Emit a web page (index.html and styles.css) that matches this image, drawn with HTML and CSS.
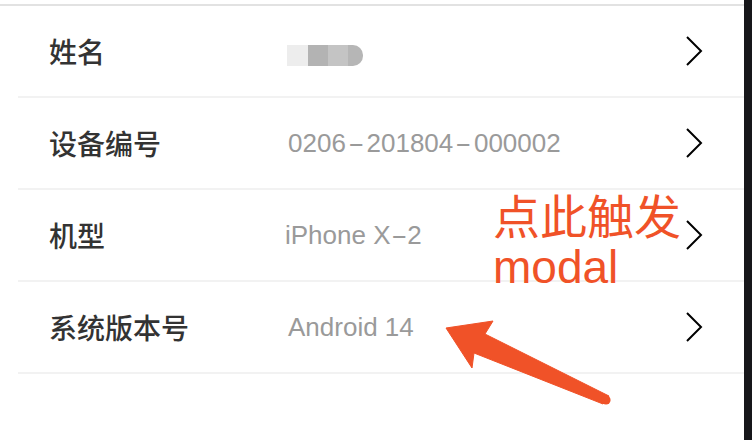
FILE: index.html
```html
<!DOCTYPE html>
<html lang="zh-CN">
<head>
<meta charset="utf-8">
<title>设备信息</title>
<link rel="stylesheet" href="styles.css">
</head>
<body>
<div class="page">
  <div class="screen">
    <div class="topline"></div>
    <ul class="list">
      <li class="row">
        <span class="label">姓名</span>
        <span class="value">
          <span class="blur"><i class="b1"></i><i class="b2"></i><i class="b3"></i><i class="b4"></i></span>
        </span>
        <svg class="chev" width="18" height="30" viewBox="0 0 18 30"><polyline points="2,1 16,15 2,29" fill="none" stroke="#000" stroke-width="2"/></svg>
      </li>
      <li class="row">
        <span class="label">设备编号</span>
        <span class="value">0206<span class="dash">-</span>201804<span class="dash">-</span>000002</span>
        <svg class="chev" width="18" height="30" viewBox="0 0 18 30"><polyline points="2,1 16,15 2,29" fill="none" stroke="#000" stroke-width="2"/></svg>
      </li>
      <li class="row">
        <span class="label">机型</span>
        <span class="value shift">iPhone X<span class="dash">-</span>2</span>
        <svg class="chev" width="18" height="30" viewBox="0 0 18 30"><polyline points="2,1 16,15 2,29" fill="none" stroke="#000" stroke-width="2"/></svg>
      </li>
      <li class="row">
        <span class="label">系统版本号</span>
        <span class="value">Android 14</span>
        <svg class="chev" width="18" height="30" viewBox="0 0 18 30"><polyline points="2,1 16,15 2,29" fill="none" stroke="#000" stroke-width="2"/></svg>
      </li>
    </ul>
  </div>
  <div class="edge"></div>

  <div class="note">
    <div class="note-cn">点此触发</div>
    <div class="note-en">modal</div>
  </div>
  <svg class="arrow" width="752" height="440" viewBox="0 0 752 440">
    <polygon points="446,328 493,321 485,334 609,396 603,404 474,353 472,368" fill="#f05228" stroke="#f05228" stroke-width="1" stroke-linejoin="round"/>
    <circle cx="606" cy="400" r="4.6" fill="#f05228"/>
  </svg>
</div>
</body>
</html>
```

FILE: styles.css
```css
* { box-sizing: border-box; }
html, body {
  margin: 0;
  padding: 0;
  background: #ffffff;
}
.page {
  position: relative;
  width: 752px;
  height: 440px;
  display: flex;
  overflow: hidden;
}
.screen {
  width: 744px;
  padding-top: 4px;
}
.edge {
  width: 8px;
  background: #17171a;
}
.topline {
  height: 2px;
  background: #e2e2e2;
}
.list {
  list-style: none;
  margin: 0;
  padding: 0 0 0 18px;
}
.row {
  height: 92px;
  display: flex;
  align-items: center;
  padding-left: 31px;
  border-bottom: 2px solid #f2f2f2;
}
.label {
  width: 239px;
  font-family: "Noto Sans CJK SC", "Noto Sans", sans-serif;
  font-size: 28px;
  font-weight: 500;
  color: #333333;
  line-height: 1;
}
.value {
  flex: 1;
  font-family: "Liberation Sans", "Noto Sans CJK SC", sans-serif;
  font-size: 26px;
  color: #9a9a9a;
  line-height: 1;
  display: flex;
  align-items: center;
}
.value.shift {
  margin-left: -3px;
}
.dash {
  display: inline-block;
  transform: scaleX(1.9);
  margin: 0 6px;
}
.shift .dash {
  margin: 0 4px;
}
.chev {
  display: block;
  margin-right: 41px;
}
.blur {
  display: flex;
  height: 21px;
  margin-top: 8px;
  margin-left: -1px;
  border-radius: 0 10px 10px 0;
  overflow: hidden;
}
.blur i {
  display: block;
  width: 20px;
  height: 21px;
}
.blur .b1 { background: #ededed; width: 21px; }
.blur .b2 { background: #b3b3b3; }
.blur .b3 { background: #c4c4c4; }
.blur .b4 { background: #b6b6b6; width: 15px; }

.note {
  position: absolute;
  left: 493px;
  top: 186px;
  color: #f05228;
}
.note-cn {
  font-family: "Noto Sans CJK SC", sans-serif;
  font-size: 47px;
  line-height: 56px;
}
.note-en {
  font-family: "Liberation Sans", sans-serif;
  font-size: 46px;
  line-height: 50px;
}
.arrow {
  position: absolute;
  left: 0;
  top: 0;
  pointer-events: none;
}
```
